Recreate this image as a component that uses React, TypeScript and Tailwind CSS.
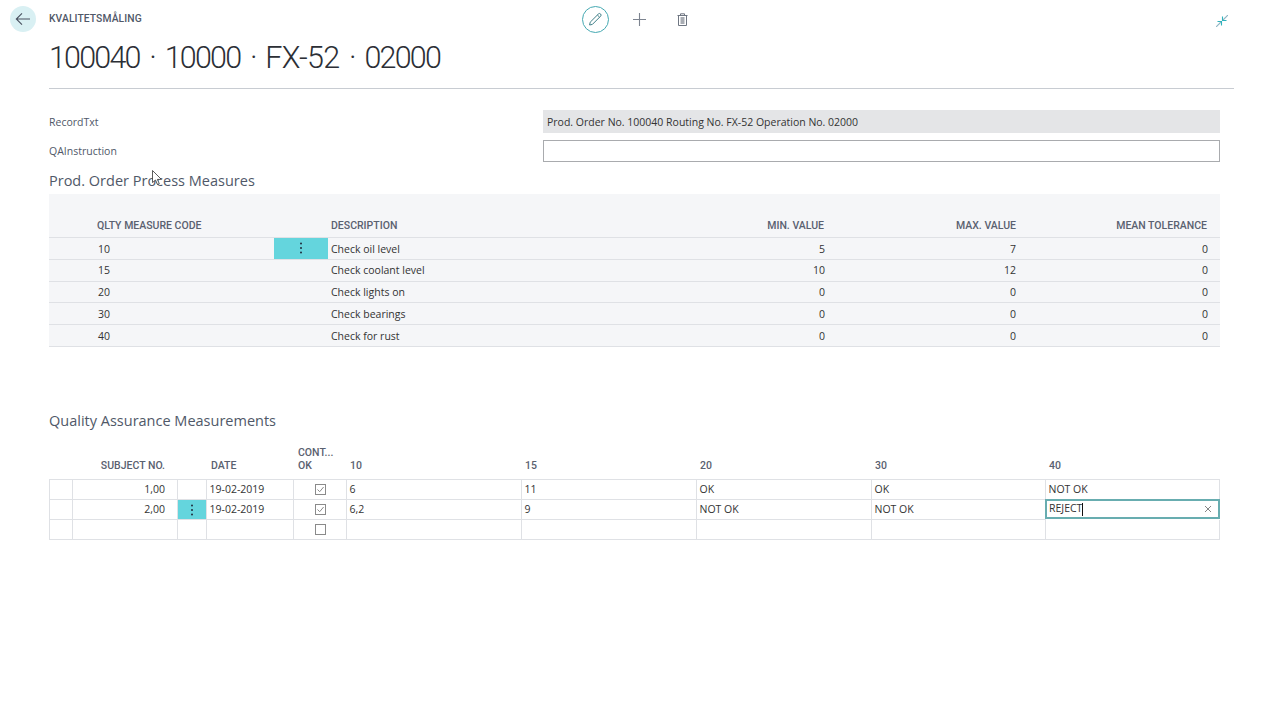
import React from "react";

const body = "font-['Open_Sans','Noto_Sans',sans-serif]";
const head = "font-['Roboto','Noto_Sans',sans-serif] font-medium";

const top = [
  ["10", "Check oil level", "5", "7", "0"],
  ["15", "Check coolant level", "10", "12", "0"],
  ["20", "Check lights on", "0", "0", "0"],
  ["30", "Check bearings", "0", "0", "0"],
  ["40", "Check for rust", "0", "0", "0"],
];

const qaCols = "grid grid-cols-[24px_105px_29px_87px_53px_175px_175px_175px_174px_174px]";
const topCols = "grid grid-cols-[225px_54px_300px_199px_191px_202px]";

function Dots() {
  return (
    <svg width="4" height="12" viewBox="0 0 4 12" className="text-[#1f2d3d]">
      <circle cx="2" cy="1.5" r="1" fill="currentColor" />
      <circle cx="2" cy="6" r="1" fill="currentColor" />
      <circle cx="2" cy="10.5" r="1" fill="currentColor" />
    </svg>
  );
}

function Check({ on }: { on: boolean }) {
  return (
    <svg width="11" height="11" viewBox="0 0 11 11" fill="none">
      <rect x="0.5" y="0.5" width="10" height="10" stroke="#8a8a8a" />
      {on && <path d="M2.5 5.5 L4.7 7.7 L8.6 3" stroke="#8a8a8a" />}
    </svg>
  );
}

function Cell({ children, className = "" }: { children?: React.ReactNode; className?: string }) {
  return (
    <div className={`h-5 flex items-center border-r border-b border-[#dfe1e5] text-[10.5px] text-[#333] px-[2.5px] ${className}`}>
      {children}
    </div>
  );
}

function QaRow({ n, d, c, vals, active, last }: { n: string; d: string; c?: boolean; vals: string[]; active?: boolean; last?: boolean }) {
  return (
    <div className={qaCols}>
      <Cell className="border-l" />
      <Cell className="justify-end pr-[12px]">{n}</Cell>
      <Cell className={active ? "bg-[#64d5dd] justify-center" : ""}>{active && <Dots />}</Cell>
      <Cell>{d}</Cell>
      <Cell className="justify-center"><Check on={!!c} /></Cell>
      {vals.map((v, i) =>
        last && i === 4 ? (
          <div key={i} className="h-5 flex items-center justify-between border-2 border-[#68adb0] text-[10.5px] text-[#333] px-[2px] -mt-px -ml-px">
            <span className="flex items-center">REJECT<span className="w-px h-[13px] bg-[#111]" /></span>
            <svg width="8" height="8" viewBox="0 0 8 8" className="mr-[4px]"><path d="M1 1L7 7M7 1L1 7" stroke="#777" strokeWidth="0.9" /></svg>
          </div>
        ) : (
          <Cell key={i}>{v}</Cell>
        )
      )}
    </div>
  );
}

export default function App() {
  return (
    <div className={`relative w-[1280px] h-[720px] bg-white overflow-hidden ${body}`}>
      {/* header */}
      <div className="flex items-center h-[38px]">
        <div className="w-[49px] pl-[9.5px] shrink-0">
          <div className="w-[26px] h-[26px] rounded-full bg-[#d9f0f3] flex items-center justify-center">
            <svg width="16" height="14" viewBox="0 0 16 14" fill="none" stroke="#4a5160" strokeWidth="1.1">
              <path d="M15 7H1.5M7 1.3L1.3 7L7 12.7" />
            </svg>
          </div>
        </div>
        <div className={`w-[533px] text-[10.3px] tracking-[0.1px] text-[#505868] ${head}`}>KVALITETSMÅLING</div>
        <div className="flex items-center">
          <div className="w-[27px] h-[27px] rounded-full border border-[#45a9b2] flex items-center justify-center">
            <svg width="15" height="15" viewBox="0 0 15 15" fill="none" stroke="#3f7f88" strokeWidth="1">
              <path d="M2.2 10.2L10.4 2a1.5 1.5 0 0 1 2.2 2.2L4.4 12.4L1.6 13Z" />
              <path d="M9.4 3L11.6 5.2" />
            </svg>
          </div>
          <svg className="ml-[24px]" width="13" height="13" viewBox="0 0 13 13" fill="none" stroke="#7d8490" strokeWidth="1.1">
            <path d="M6.5 0V13M0 6.5H13" />
          </svg>
          <svg className="ml-[31px]" width="11" height="13" viewBox="0 0 11 13" fill="none" stroke="#6f7682" strokeWidth="1">
            <path d="M0.5 2.5H10.5M3.5 2.5V0.8H7.5V2.5M1.5 2.5V12.5H9.5V2.5" />
            <rect x="3.5" y="4" width="4" height="7" fill="#a9adb4" stroke="none" />
          </svg>
        </div>
        <div className="ml-auto mr-[52px] mt-[4px]">
          <svg width="12" height="12" viewBox="0 0 12 12" fill="none" strokeWidth="1.1">
            <path d="M12 0L7 5" stroke="#8fb6c4" />
            <path d="M6.5 1.5V5.5H10.5" stroke="#2fb3bd" />
            <path d="M0 12L5 7" stroke="#8fb6c4" />
            <path d="M1.5 6.5H5.5V10.5" stroke="#2fb3bd" />
          </svg>
        </div>
      </div>

      <div className="pl-[49px] pr-[46px]">
        <h1 className="font-['Roboto',sans-serif] text-[30.5px] font-light leading-[40px] text-[#2c2f36] h-[50px] tracking-[-1.8px] [word-spacing:4px]">100040 · 10000 · <span className="tracking-[-0.7px]">FX-52</span> · 02000</h1>
        <div className="h-px bg-[#c8ccd2]" />

        {/* fields */}
        <div className="mr-[14px] pt-[21px]">
          <div className="flex items-center h-[23px]">
            <div className="w-[494px] pt-[2px] text-[10.5px] text-[#505868]">RecordTxt</div>
            <div className="flex-1 h-[23px] bg-[#e4e5e7] flex items-center px-[4px] pt-[2px] text-[10.5px] text-[#333]">Prod. Order No. 100040 Routing No. FX-52 Operation No. 02000</div>
          </div>
          <div className="flex items-center h-[22px] mt-[7px]">
            <div className="w-[494px] pt-[2px] text-[10.5px] text-[#505868]">QAInstruction</div>
            <div className="flex-1 h-[22px] bg-white border border-[#a9abae]" />
          </div>
        </div>

        {/* Process measures */}
        <h2 className="mt-[7px] h-[24px] text-[14.5px] leading-[23px] text-[#505868]">Prod. Order Process Measures</h2>
        <div className="mr-[14px] mt-[1px] bg-[#f5f6f8] h-[153px] pt-[24px]">
          <div className={`${topCols} h-[20px] pb-[5px] items-center border-b border-[#dfe1e5] text-[10.5px] text-[#5a6170] ${head}`}>
            <div className="pl-[48px]">QLTY MEASURE CODE</div>
            <div />
            <div className="pl-[3px]">DESCRIPTION</div>
            <div className="text-right pr-[3px]">MIN. VALUE</div>
            <div className="text-right pr-[2px]">MAX. VALUE</div>
            <div className="text-right pr-[13px]">MEAN TOLERANCE</div>
          </div>
          {top.map((r, i) => (
            <div key={r[0]} className={`${topCols} h-[21.8px] items-center border-b border-[#dfe1e5] text-[10.5px] text-[#333]`}>
              <div className="pl-[49px] pt-[2px]">{r[0]}</div>
              <div className={i === 0 ? "h-full bg-[#64d5dd] flex items-center justify-center" : ""}>{i === 0 && <Dots />}</div>
              <div className="pl-[3px] pt-[2px]">{r[1]}</div>
              <div className="text-right pr-[2px] pt-[2px]">{r[2]}</div>
              <div className="text-right pr-[2px] pt-[2px]">{r[3]}</div>
              <div className="text-right pr-[12px] pt-[2px]">{r[4]}</div>
            </div>
          ))}
        </div>

        {/* QA */}
        <h2 className="mt-[61px] h-[24px] text-[14.5px] leading-[26px] text-[#505868]">Quality Assurance Measurements</h2>
        <div className="mr-[14px] mt-[14px]">
          <div className={`${qaCols} h-[33px] items-end pb-[7px] text-[10.5px] leading-[13px] text-[#5a6170] ${head}`}>
            <div />
            <div className="text-right pr-[13px]">SUBJECT NO.</div>
            <div />
            <div className="pl-[4px]">DATE</div>
            <div className="pl-[4px]">CONT...<br />OK</div>
            <div className="pl-[3px]">10</div>
            <div className="pl-[3px]">15</div>
            <div className="pl-[3px]">20</div>
            <div className="pl-[3px]">30</div>
            <div className="pl-[3px]">40</div>
          </div>
          <div className="border-t border-[#dfe1e5]">
            <QaRow n="1,00" d="19-02-2019" c vals={["6", "11", "OK", "OK", "NOT OK"]} />
            <QaRow n="2,00" d="19-02-2019" c active last vals={["6,2", "9", "NOT OK", "NOT OK", "REJECT"]} />
            <QaRow n="" d="" vals={["", "", "", "", ""]} />
          </div>
        </div>
      </div>

      {/* mouse cursor */}
      <svg className="absolute left-[152px] top-[170px]" width="11" height="16" viewBox="0 0 11 16" fill="white" stroke="#333" strokeWidth="0.8">
        <path d="M0.5 0.5V12.5L3.5 10L5.5 14.5L7.3 13.7L5.4 9.4H9.4Z" />
      </svg>
    </div>
  );
}
